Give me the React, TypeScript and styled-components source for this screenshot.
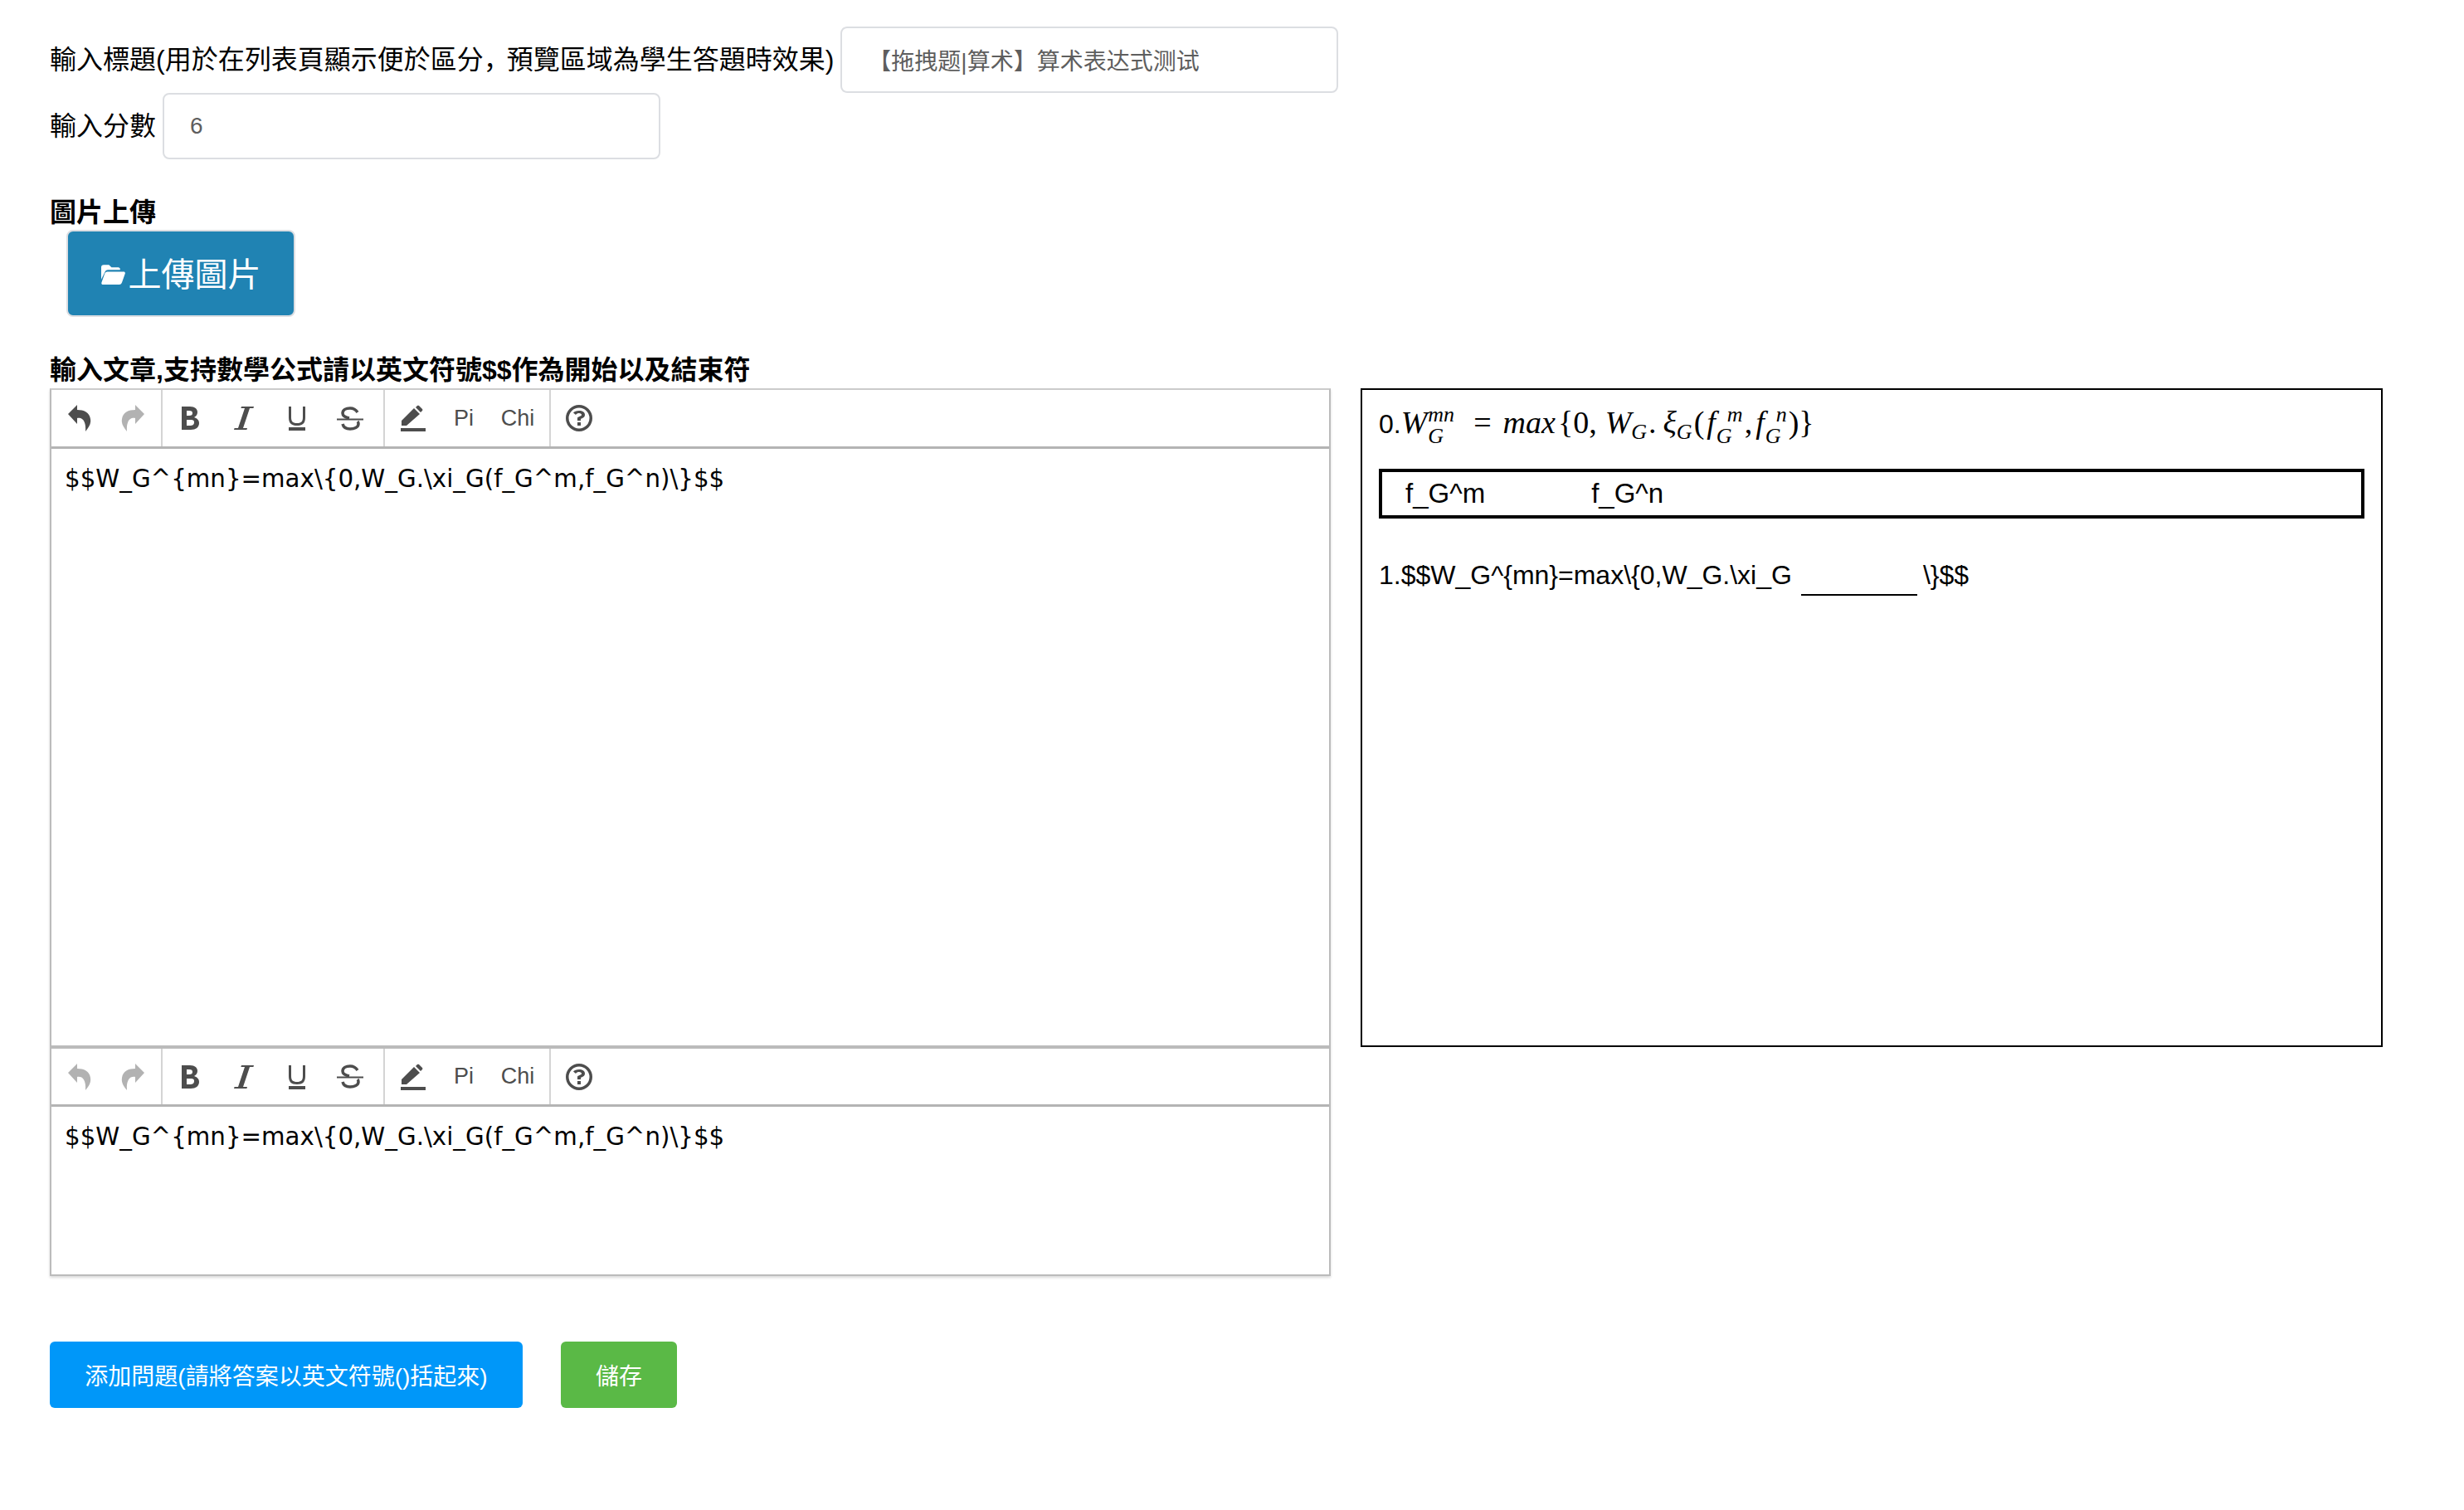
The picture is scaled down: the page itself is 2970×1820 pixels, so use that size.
import React, { ReactElement } from 'react'
import styled, { createGlobalStyle } from 'styled-components'

const GlobalStyle = createGlobalStyle`
  html, body {
    margin: 0;
    padding: 0;
    background: #fff;
    font-family: "Liberation Sans", "Noto Sans CJK SC", sans-serif;
    color: #000;
  }
`

const Page = styled.div`
  width: 2970px;
  height: 1820px;
  padding: 32px 0 0 60px;
  box-sizing: border-box;
  overflow: hidden;
`

const FieldRow = styled.div`
  display: flex;
  align-items: center;
  height: 80px;
`

const FieldLabel = styled.label`
  font-size: 32px;
  padding: 0 8px 6px 0;
  white-space: nowrap;
`

const NarrowComma = styled.span`
  margin-right: -4px;
`

const TextInput = styled.div`
  width: 600px;
  height: 80px;
  box-sizing: border-box;
  border: 2px solid #dcdee2;
  border-radius: 8px;
  padding: 0 31px;
  display: flex;
  align-items: center;
  font-size: 28px;
  color: #5e5e5e;
`

const SectionTitle = styled.div<{ $top: number }>`
  margin-top: ${(p) => p.$top}px;
  font-size: 32px;
  line-height: 40px;
  font-weight: 700;
`

const UploadButton = styled.button`
  display: flex;
  align-items: center;
  justify-content: center;
  width: 276px;
  height: 105px;
  margin: 1px 0 0 20px;
  border: 2px solid #dcdee2;
  border-radius: 8px;
  background: #2083b3;
  color: #fff;
  font-family: inherit;
  font-size: 40px;
  padding: 0 0 3px;

  svg {
    margin: 3px 4px 0 0;
    fill: #fff;
  }
`

const Workspace = styled.div`
  display: flex;
  align-items: flex-start;
  gap: 36px;
  margin-top: 2px;
`

const EditorStack = styled.div`
  width: 1544px;
  border: 2px solid #bbb;
  border-top-color: #ccc;
  box-sizing: border-box;
  box-shadow: 0 2px 3px rgba(0, 0, 0, 0.15);
`

const Toolbar = styled.div<{ $first?: boolean }>`
  display: flex;
  height: ${(p) => (p.$first ? 71 : 74)}px;
  box-sizing: border-box;
  border-bottom: 3px solid #b4b4b4;
  ${(p) => (p.$first ? '' : 'border-top: 4px solid #bbb;')}
`

const ToolGroup = styled.div<{ $last?: boolean; $pad?: number }>`
  display: flex;
  align-items: center;
  padding-right: ${(p) => p.$pad ?? 0}px;
  ${(p) => (p.$last ? '' : 'border-right: 2px solid #d4d4d4;')}
`

const ToolButton = styled.span<{ $faded?: boolean; $w?: number }>`
  display: flex;
  align-items: center;
  justify-content: center;
  width: ${(p) => p.$w ?? 64}px;
  height: 100%;
  color: ${(p) => (p.$faded ? '#b2b2b2' : '#4d4d4d')};
  font-size: 27px;

  svg {
    display: block;
    fill: currentColor;
  }
`

const EditArea = styled.div<{ $height: number }>`
  height: ${(p) => p.$height}px;
  box-sizing: border-box;
  padding: 16px 16px 0;
  font-family: "DejaVu Sans", sans-serif;
  font-size: 29.3px;
  line-height: 40px;
`

const Preview = styled.div`
  width: 1232px;
  height: 794px;
  box-sizing: border-box;
  border: 2px solid #000;
  padding: 17px 20px 0;
  font-size: 32px;
`

const FormulaLine = styled.div`
  display: flex;
  align-items: baseline;
  height: 58px;
  font-size: 32px;
`

const MathText = styled.span<{ $left?: number; $right?: number }>`
  font-family: "Liberation Serif", serif;
  font-size: 38px;
  margin: 0 ${(p) => p.$right ?? 0}px 0 ${(p) => p.$left ?? 0}px;
`

const MathVar = styled(MathText)`
  font-style: italic;
`

const Scripts = styled.span<{ $right?: number }>`
  display: inline-flex;
  flex-direction: column;
  font-family: "Liberation Serif", serif;
  font-style: italic;
  font-size: 26px;
  line-height: 26px;
  align-self: center;
  margin: -6px ${(p) => p.$right ?? 2}px 0 1px;
`

const SupLine = styled.span<{ $shift?: number }>`
  padding-left: ${(p) => p.$shift ?? 0}px;
`

const Sub = styled.sub`
  font-size: 26px;
  line-height: 0;
  vertical-align: -7px;
`

const DragBox = styled.div`
  height: 60px;
  margin-top: 20px;
  box-sizing: border-box;
  border: 4px solid #000;
  display: flex;
  align-items: center;
  padding-left: 28px;
  gap: 128px;
  font-size: 33px;
`

const QuestionLine = styled.div`
  margin-top: 46px;
  line-height: 44px;
`

const Blank = styled.span`
  display: inline-block;
  width: 140px;
  height: 0;
  margin: 0 7px -14px 11px;
  border-bottom: 2px solid #000;
`

const Actions = styled.div`
  display: flex;
  gap: 46px;
  margin-top: 79px;
`

const ActionButton = styled.button<{ $color: string; $width: number }>`
  width: ${(p) => p.$width}px;
  height: 80px;
  border: none;
  border-radius: 6px;
  background: ${(p) => p.$color};
  color: #fff;
  font-family: inherit;
  font-size: 28px;
  padding: 0;
`

const FolderIcon = () => (
  <svg width="29" height="26" viewBox="0 0 28 25">
    <path d="M0 5c0-2 1-3 3-3h6l3 3h8c1 0 2 1 2 2v1H8c-2 0-3 1-4 3L0 19z" />
    <path d="M7 10h19c1.500 0 2.200 1 1.700 2.500l-3.500 10c-.5 1.500-1.500 2.500-3.200 2.500H2c-1.500 0-2-1-1.500-2.500L4 12.500C4.500 11 5.500 10 7 10z" />
  </svg>
)

const undoPath = 'M11 0 0 11l11 12v-7c6-1 11 3 10 16 4-5 7-9 6-15C26 9 19 6 11 6z'

const UndoIcon = () => (
  <svg width="28" height="32" viewBox="0 0 28 32">
    <path d={undoPath} />
  </svg>
)

const RedoIcon = () => (
  <svg width="28" height="32" viewBox="0 0 28 32">
    <path d={undoPath} transform="matrix(-1 0 0 1 28 0)" />
  </svg>
)

const BoldIcon = () => (
  <svg width="22" height="30" viewBox="0 0 22 30">
    <path
      fillRule="evenodd"
      d="M1 1h10c6 0 9 3 9 7 0 3-2 5-4 6 3 1 6 3 6 7 0 5-4 8-10 8H1zM7 6v6h3c3 0 4-1 4-3s-1-3-4-3zM7 17v7h4c3 0 5-1 5-4s-2-3-5-3z"
    />
  </svg>
)

const ItalicIcon = () => (
  <svg width="24" height="28" viewBox="0 0 24 28">
    <path d="M9 0h15l-.6 2H19L11 26h5l-.6 2H0l.6-2H5l8-24H8.400z" />
  </svg>
)

const UnderlineIcon = () => (
  <svg width="22" height="30" viewBox="0 0 22 30">
    <path d="M1 1h3v13c0 5 2 7 7 7s7-2 7-7V1h3v13c0 7-3 10-10 10S1 21 1 14zM1 26h20v4H1z" />
  </svg>
)

const StrikeIcon = () => (
  <svg width="32" height="29" viewBox="0 0 32 29">
    <path d="M0 14.500h32v2H0z" />
    <path
      stroke="currentColor"
      strokeWidth="3.500"
      style={{ fill: 'none' }}
      d="M25 7c-2-3-5-5-9-5-5 0-9 2-9 6 0 3 3 5 8 6M25 18c1 1 1 2 1 3 0 4-5 6-10 6-5 0-8-2-9-6"
    />
  </svg>
)

const MarkerIcon = () => (
  <svg width="30" height="32" viewBox="0 0 30 32">
    <path d="M0 24v-6L15 3l7 7L6 24zM17 2l2-2c.6-.5 1.500-.5 2 0l4 4c.5.5.5 1.400 0 2l-2 2z" transform="translate(1 1)" />
    <path d="M0 28h30v4H0z" />
  </svg>
)

const HelpIcon = () => (
  <svg width="32" height="32" viewBox="0 0 32 32">
    <path
      fillRule="evenodd"
      d="M16 0a16 16 0 1 0 0 32 16 16 0 0 0 0-32zm0 3.500a12.500 12.500 0 1 1 0 25 12.500 12.500 0 0 1 0-25z"
    />
    <path d="M9 9.500C10 8 13 7 16 7c4 0 7 1.500 7 5 0 3-3 4-5 5v2h-4v-3c0-2 5-2 5-4 0-1-1-2-3-2-1.500 0-3 .5-4 2zM14 21h4v4h-4z" />
  </svg>
)

function EditorToolbar({ first }: { first?: boolean }): ReactElement {
  return (
    <Toolbar $first={first}>
      <ToolGroup $pad={4}>
        <ToolButton $w={68} $faded={!first}>
          <UndoIcon />
        </ToolButton>
        <ToolButton $w={60} $faded>
          <RedoIcon />
        </ToolButton>
      </ToolGroup>
      <ToolGroup $pad={8}>
        <ToolButton $w={66}>
          <BoldIcon />
        </ToolButton>
        <ToolButton>
          <ItalicIcon />
        </ToolButton>
        <ToolButton>
          <UnderlineIcon />
        </ToolButton>
        <ToolButton>
          <StrikeIcon />
        </ToolButton>
      </ToolGroup>
      <ToolGroup>
        <ToolButton $w={68}>
          <MarkerIcon />
        </ToolButton>
        <ToolButton $w={54}>Pi</ToolButton>
        <ToolButton $w={76}>Chi</ToolButton>
      </ToolGroup>
      <ToolGroup $last>
        <ToolButton $w={68}>
          <HelpIcon />
        </ToolButton>
      </ToolGroup>
    </Toolbar>
  )
}

const source = '$$W_G^{mn}=max\\{0,W_G.\\xi_G(f_G^m,f_G^n)\\}$$'

function App(): ReactElement {
  return (
    <Page>
      <GlobalStyle />
      <FieldRow>
        <FieldLabel>
          輸入標題(用於在列表頁顯示便於區分<NarrowComma>，</NarrowComma>預覽區域為學生答題時效果)
        </FieldLabel>
        <TextInput>【拖拽题|算术】算术表达式测试</TextInput>
      </FieldRow>
      <FieldRow>
        <FieldLabel>輸入分數</FieldLabel>
        <TextInput>6</TextInput>
      </FieldRow>
      <SectionTitle $top={44}>圖片上傳</SectionTitle>
      <UploadButton>
        <FolderIcon />
        上傳圖片
      </UploadButton>
      <SectionTitle $top={44}>輸入文章,支持數學公式請以英文符號$$作為開始以及結束符</SectionTitle>
      <Workspace>
        <EditorStack>
          <EditorToolbar first />
          <EditArea $height={719}>{source}</EditArea>
          <EditorToolbar />
          <EditArea $height={202}>{source}</EditArea>
        </EditorStack>
        <Preview>
          <FormulaLine>
            0.
            <MathVar>W</MathVar>
            <Scripts $right={0}>
              <SupLine>mn</SupLine>
              <span>G</span>
            </Scripts>
            <MathText $left={23} $right={14}>=</MathText>
            <MathVar>max</MathVar>
            <MathText $left={3} $right={10}>{'{'}0,</MathText>
            <MathVar>
              W<Sub>G</Sub>
            </MathVar>
            <MathText $left={2} $right={8}>.</MathText>
            <MathVar>
              ξ<Sub>G</Sub>
            </MathVar>
            <MathText $left={2} $right={3}>(</MathText>
            <MathVar>f</MathVar>
            <Scripts $right={2}>
              <SupLine $shift={13}>m</SupLine>
              <span>G</span>
            </Scripts>
            <MathText $right={4}>,</MathText>
            <MathVar>f</MathVar>
            <Scripts $right={2}>
              <SupLine $shift={13}>n</SupLine>
              <span>G</span>
            </Scripts>
            <MathText $right={2}>){'}'}</MathText>
          </FormulaLine>
          <DragBox>
            <span>f_G^m</span>
            <span>f_G^n</span>
          </DragBox>
          <QuestionLine>
            1.$$W_G^{'{mn}'}=max\{'{'}0,W_G.\xi_G
            <Blank />
            \{'}'}$$
          </QuestionLine>
        </Preview>
      </Workspace>
      <Actions>
        <ActionButton $color="#0097f9" $width={570}>
          添加問題(請將答案以英文符號()括起來)
        </ActionButton>
        <ActionButton $color="#5ab946" $width={140}>
          儲存
        </ActionButton>
      </Actions>
    </Page>
  )
}

export default App
